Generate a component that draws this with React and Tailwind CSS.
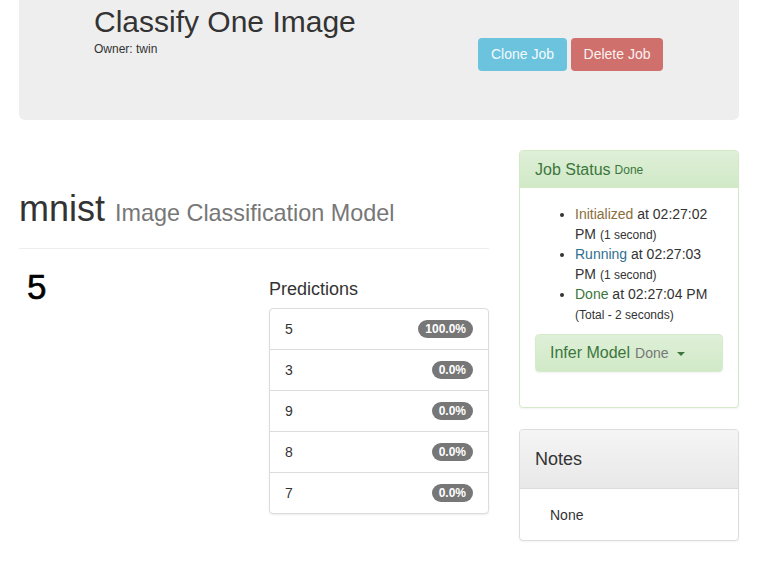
import React from 'react';

const predictions = [
  { label: '5', value: '100.0%' },
  { label: '3', value: '0.0%' },
  { label: '9', value: '0.0%' },
  { label: '8', value: '0.0%' },
  { label: '7', value: '0.0%' },
];

function Jumbotron() {
  return (
    <div className="flex h-[120px] items-start justify-between rounded-b-[6px] bg-[#eeeeee] pl-[75px] pr-[76px]">
      <div className="pt-[5px]">
        <h1 className="text-[30px] leading-[33px] text-[#333]">Classify One Image</h1>
        <p className="mt-[3px] text-[12px] leading-[17px] text-[#333]">Owner: twin</p>
      </div>
      <div className="mt-[38px] flex gap-[4px]">
        <button className="h-[33px] w-[89px] rounded-[4px] bg-[#6cc3de] text-[14px] text-[#f4fafc]">
          Clone Job
        </button>
        <button className="h-[33px] w-[92px] rounded-[4px] bg-[#cf706c] text-[14px] text-[#fbf0f0]">
          Delete Job
        </button>
      </div>
    </div>
  );
}

function PredictionList() {
  return (
    <div className="overflow-hidden rounded-[4px] border border-[#ddd] bg-white shadow-[0_1px_2px_rgba(0,0,0,0.075)]">
      {predictions.map((p, i) => (
        <div
          key={p.label}
          className={`flex h-[40px] items-center justify-between px-[15px] text-[14px] text-[#333] ${i > 0 ? 'box-content border-t border-[#ddd]' : ''}`}
        >
          <span>{p.label}</span>
          <span className="rounded-[10px] bg-[#777] px-[7px] py-[3px] text-[12px] font-bold leading-[12px] text-white">
            {p.value}
          </span>
        </div>
      ))}
    </div>
  );
}

function JobStatus() {
  return (
    <div className="overflow-hidden rounded-[4px] border border-[#d6e9c6] bg-white shadow-[0_1px_2px_rgba(0,0,0,0.05)]">
      <div className="flex h-[37px] items-center border-b border-[#d6e9c6] bg-gradient-to-b from-[#dff0d8] to-[#d0e9c6] px-[15px] pt-[1px] text-[#3c763d]">
        <span className="text-[16px]">Job Status</span>
        <span className="ml-[4px] text-[12px]">Done</span>
      </div>
      <div className="px-[15px] pt-[16px] pb-[15px]">
        <ul className="mb-[10px] list-disc pl-[40px] text-[14px] leading-[20px] text-[#333]">
          <li>
            <span className="text-[#8a6d3b]">Initialized</span> at 02:27:02 PM{' '}
            <small className="text-[12px] leading-none">(1 second)</small>
          </li>
          <li>
            <span className="text-[#31708f]">Running</span> at 02:27:03 PM{' '}
            <small className="text-[12px] leading-none">(1 second)</small>
          </li>
          <li>
            <span className="text-[#3c763d]">Done</span> at 02:27:04 PM{' '}
            <small className="text-[12px] leading-none">(Total - 2 seconds)</small>
          </li>
        </ul>
        <div className="mb-[20px] flex h-[38px] items-center rounded-[4px] border border-[#d6ebcc] bg-gradient-to-b from-[#dff0d8] to-[#d0e9c6] px-[14px] shadow-[0_1px_2px_rgba(0,0,0,0.05)]">
          <span className="text-[16px] text-[#3c763d]">Infer Model</span>
          <span className="ml-[5px] text-[14px] text-[#777]">Done</span>
          <span className="ml-[8px] mt-[1px] h-0 w-0 border-x-[4px] border-t-[4px] border-x-transparent border-t-[#3c763d]" />
        </div>
      </div>
    </div>
  );
}

function Notes() {
  return (
    <div className="mt-[21px] overflow-hidden rounded-[4px] border border-[#ddd] bg-white shadow-[0_1px_2px_rgba(0,0,0,0.05)]">
      <div className="flex h-[59px] items-center border-b border-[#ddd] bg-gradient-to-b from-[#f5f5f5] to-[#e8e8e8] px-[15px] text-[18px] text-[#333]">
        Notes
      </div>
      <div className="pt-[16px] pb-[15px] pl-[30px] pr-[15px] text-[14px] leading-[20px] text-[#333]">None</div>
    </div>
  );
}

export default function App() {
  return (
    <div className="min-h-screen bg-white font-['Liberation_Sans',Arial,sans-serif]">
      <div className="ml-[19px] w-[720px]">
        <Jumbotron />
        <div className="mt-[30px] flex gap-[30px]">
          <div className="w-[470px]">
            <div className="mt-[39px] border-b border-[#eee] pb-[19px]">
              <h2 className="text-[36px] leading-[40px] text-[#333]">
                mnist <small className="text-[23.4px] leading-none text-[#777]">Image Classification Model</small>
              </h2>
            </div>
            <div className="mt-[20px] flex gap-[30px]">
              <div className="w-[220px]">
                <div className="ml-[8px] text-[35px] leading-[35px] text-black [-webkit-text-stroke:0.6px_black]">5</div>
              </div>
              <div className="w-[220px]">
                <h4 className="mt-[10px] text-[18px] leading-[20px] text-[#333]">Predictions</h4>
                <div className="mt-[9px]">
                  <PredictionList />
                </div>
              </div>
            </div>
          </div>
          <div className="w-[220px]">
            <JobStatus />
            <Notes />
          </div>
        </div>
      </div>
    </div>
  );
}
